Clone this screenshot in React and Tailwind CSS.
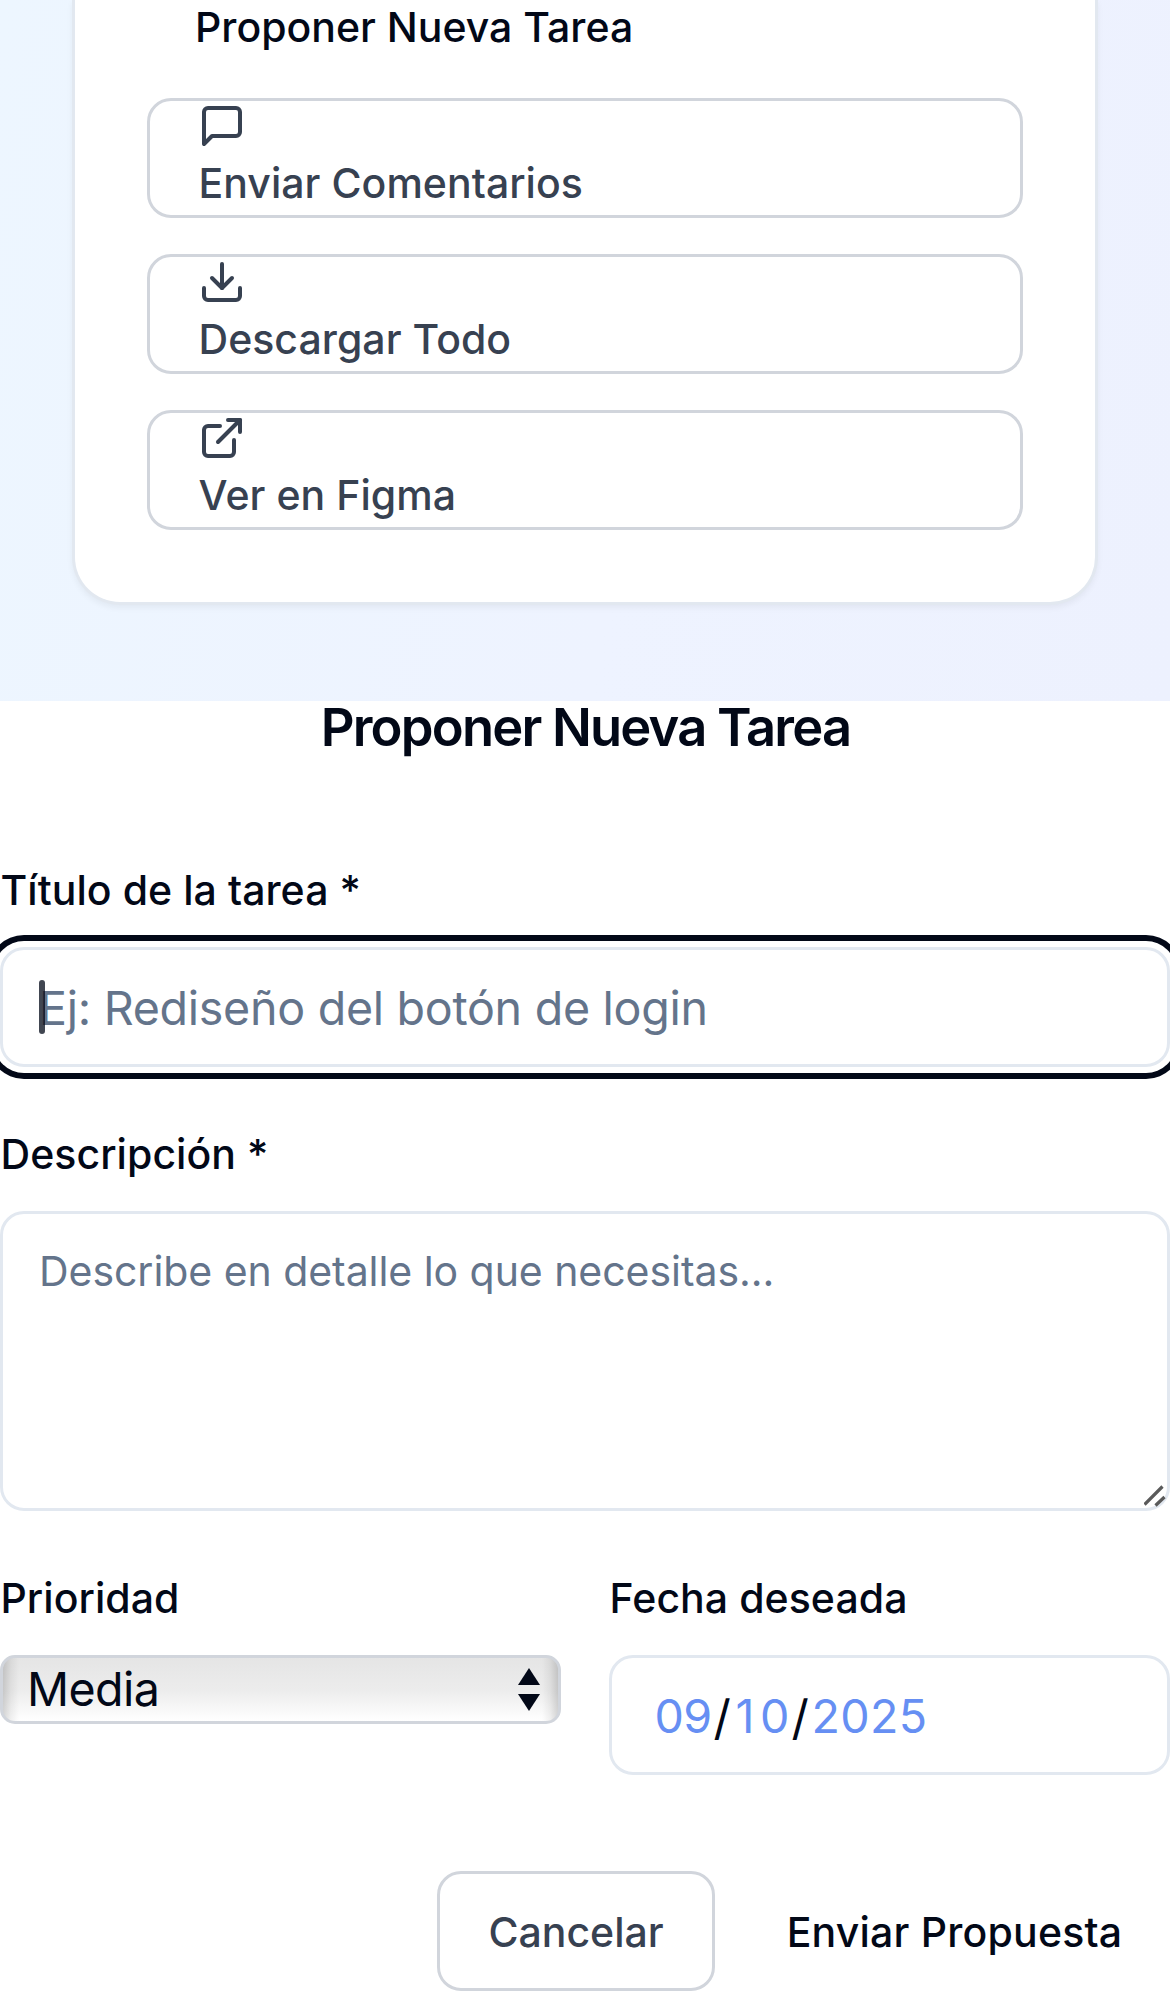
const iconPaths = {
  message: <path d="M21 15a2 2 0 0 1-2 2H7l-4 4V5a2 2 0 0 1 2-2h14a2 2 0 0 1 2 2z" />,
  download: (
    <>
      <path d="M21 15v4a2 2 0 0 1-2 2H5a2 2 0 0 1-2-2v-4" />
      <polyline points="7 10 12 15 17 10" />
      <line x1="12" x2="12" y1="15" y2="3" />
    </>
  ),
  external: (
    <>
      <path d="M15 3h6v6" />
      <path d="M10 14 21 3" />
      <path d="M18 13v6a2 2 0 0 1-2 2H5a2 2 0 0 1-2-2V8a2 2 0 0 1 2-2h6" />
    </>
  ),
}

function ActionButton({ icon, children }) {
  return (
    <button
      type="button"
      className="flex h-[120px] w-full flex-col items-start justify-start rounded-[24px] border-[3px] border-gray-300 bg-white px-[48px] pt-px text-left font-medium tracking-[0.04px] text-[#374151]"
    >
      <svg
        className="block size-[48px] shrink-0"
        viewBox="0 0 24 24"
        fill="none"
        stroke="currentColor"
        strokeWidth="2"
        strokeLinecap="round"
        strokeLinejoin="round"
      >
        {iconPaths[icon]}
      </svg>
      <span className="mt-[3px] block pl-[0.5px] leading-[60px]">{children}</span>
    </button>
  )
}

function Label({ children }) {
  return <label className="block pl-[0.5px] font-medium leading-[42px] tracking-[0.06px]">{children}</label>
}

function QuickActions() {
  return (
    <section className="h-[701px] bg-[linear-gradient(100deg,#edf6ff,#eef3ff_55%,#edf1fe)] px-[72px]">
      <div className="h-[605px] rounded-b-[48px] border-[3px] border-t-0 border-[#e2e8f0] bg-white px-[72px] shadow-[0_3px_6px_rgba(0,0,0,0.05)]">
        <div className="h-[98px] pl-[48px] font-medium leading-[54px]">Proponer Nueva Tarea</div>
        <div className="flex flex-col gap-[36px]">
          <ActionButton icon="message">Enviar Comentarios</ActionButton>
          <ActionButton icon="download">Descargar Todo</ActionButton>
          <ActionButton icon="external">Ver en Figma</ActionButton>
        </div>
      </div>
    </section>
  )
}

function PrioritySelect() {
  return (
    <div className="mt-[36px] flex h-[69px] items-center justify-between rounded-[15px] border-[3px] border-gray-300 bg-[linear-gradient(90deg,#00000028,#0000000e_8px,transparent_16px,transparent_calc(100%-16px),#0000000e_calc(100%-8px),#00000028),linear-gradient(180deg,#e5e5e5,#ececec_50%,#ffffff)] pl-[24px] pr-[18px] text-[46.6px] tracking-[-0.6px]">
      <span className="-mt-[2px] leading-[60px]">Media</span>
      <svg className="h-[43px] w-[22px]" viewBox="0 0 22 43" fill="currentColor">
        <path d="M11 0 22 17H0z" />
        <path d="M0 26h22L11 43z" />
      </svg>
    </div>
  )
}

function DateField() {
  return (
    <div className="mt-[36px] flex h-[120px] items-center rounded-[24px] border-[3px] border-[#e2e8f0] bg-white pl-[42.5px] pt-[2px] text-[46.6px] leading-[60px] text-[#668ff3]">
      <span className="w-[59px] tracking-[-0.6px]">09</span>
      <span className="w-[22px] pt-[4px] text-[48px] text-[#020817]">/</span>
      <span className="w-[56px] tracking-[5.5px]">10</span>
      <span className="w-[20px] pt-[4px] text-[48px] text-[#020817]">/</span>
      <span className="tracking-[0.3px]">2025</span>
    </div>
  )
}

export default function App() {
  return (
    <div className="h-[1992px] w-[1170px] overflow-hidden bg-white font-[Inter,sans-serif] text-[41px] text-[#020817]">
      <QuickActions />
      <form>
        <h2 className="pl-[1px] text-center text-[52.5px] font-semibold leading-[52px] tracking-[-1.8px]">
          Proponer Nueva Tarea
        </h2>

        <div className="mt-[116px]">
          <Label>Título de la tarea *</Label>
          <div className="relative mt-[36px]">
            <input
              type="text"
              placeholder="Ej: Rediseño del botón de login"
              className="block h-[120px] w-full rounded-[24px] border-[3px] border-[#e2e8f0] bg-white pl-[36px] pt-[2px] text-[46.6px] tracking-[-0.29px] shadow-[0_0_0_6px_#ffffff,0_0_0_12px_#020817] placeholder:text-[#64748b] placeholder:opacity-100"
            />
            <span className="absolute left-[39px] top-[33px] h-[54px] w-[6px] rounded-full bg-[#020817]/75" />
          </div>
        </div>

        <div className="mt-[66px]">
          <Label>Descripción *</Label>
          <div className="relative mt-[36px]">
            <textarea
              placeholder="Describe en detalle lo que necesitas..."
              className="block h-[300px] w-full resize-none rounded-[24px] border-[3px] border-[#e2e8f0] bg-white px-[36px] pt-[27px] leading-[60px] tracking-[-0.05px] placeholder:text-[#64748b] placeholder:opacity-100"
            />
            <svg
              className="absolute bottom-[4px] right-[4px] size-[22px]"
              viewBox="0 0 22 22"
              fill="none"
              stroke="#5a5a5a"
              strokeWidth="3.2"
            >
              <path d="M0.5 19.5 18.5 1.5M11.5 20.5 20.5 12" />
            </svg>
          </div>
        </div>

        <div className="mt-[66px] grid grid-cols-2 gap-[48px]">
          <div>
            <Label>Prioridad</Label>
            <PrioritySelect />
          </div>
          <div>
            <Label>Fecha deseada</Label>
            <DateField />
          </div>
        </div>

        <div className="mt-[96px] flex justify-end gap-[24px]">
          <button
            type="button"
            className="h-[120px] w-[278px] rounded-[24px] border-[3px] border-gray-300 bg-white pt-[4px] font-medium text-[#374151]"
          >
            Cancelar
          </button>
          <button type="button" className="h-[120px] w-[431px] rounded-[24px] pt-[4px] font-medium tracking-[0.2px]">
            Enviar Propuesta
          </button>
        </div>
      </form>
    </div>
  )
}
